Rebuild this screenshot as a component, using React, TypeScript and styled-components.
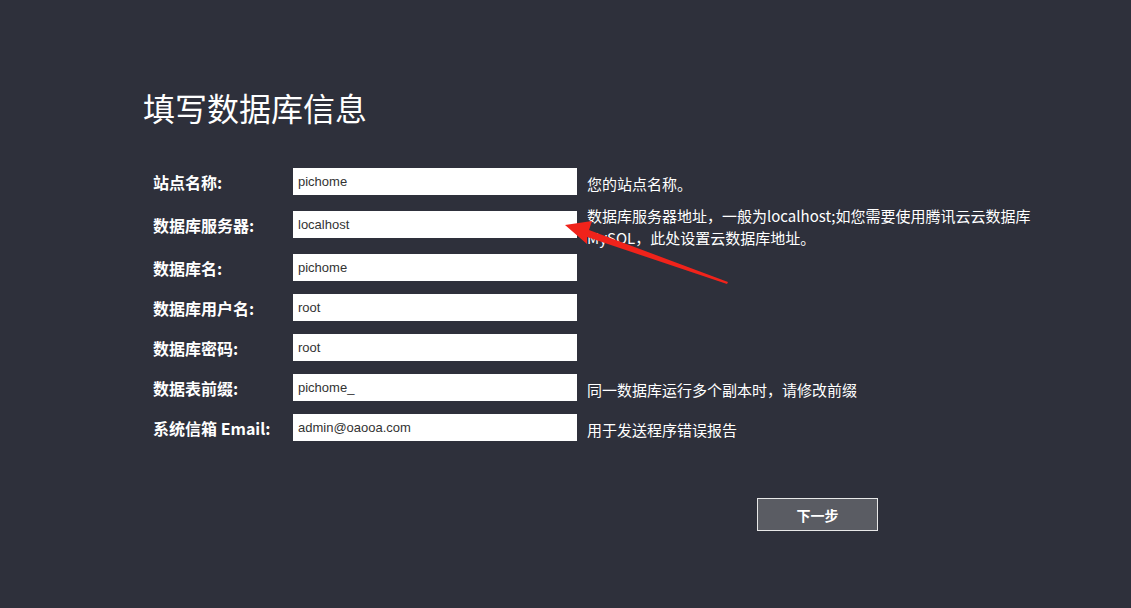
import React from "react";
import styled, { createGlobalStyle } from "styled-components";

const Global = createGlobalStyle`
  html, body {
    margin: 0;
    padding: 0;
    background: #2e303b;
  }
  body {
    font-family: "Noto Sans CJK SC", "Liberation Sans", sans-serif;
    color: #ffffff;
  }
`;

const Page = styled.div`
  position: relative;
  width: 1131px;
  height: 608px;
  box-sizing: border-box;
  padding: 85px 0 0 143px;
  background: #2e303b;
  overflow: hidden;
`;

const Content = styled.div`
  width: 735px;
`;

const Title = styled.h1`
  margin: 0 0 39px;
  font-size: 32px;
  line-height: 44px;
  font-weight: 400;
  color: #ffffff;
  font-family: "Noto Sans CJK SC", sans-serif;
`;

const Form = styled.div`
  display: flex;
  flex-direction: column;
  padding-left: 10px;
`;

const Row = styled.div<{ $gap: number }>`
  display: grid;
  grid-template-columns: 130px 284px 452px;
  grid-template-rows: 27px;
  column-gap: 10px;
  height: 27px;
  align-items: center;
  margin-bottom: ${(p) => p.$gap}px;
`;

const Label = styled.label`
  font-size: 16px;
  font-weight: 700;
  color: #ffffff;
  white-space: nowrap;
  font-family: "Noto Sans CJK SC", sans-serif;
  line-height: 22px;
`;

const Input = styled.input`
  box-sizing: border-box;
  width: 284px;
  height: 27px;
  border: none;
  outline: none;
  margin: 0;
  padding: 0 5px;
  background: #ffffff;
  color: #333333;
  font-size: 13px;
  font-family: "Liberation Sans", Arial, sans-serif;
`;

const Desc = styled.div`
  font-size: 15px;
  line-height: 22px;
  margin-top: 4px;
  color: #ffffff;
  font-family: "Noto Sans CJK SC", sans-serif;
`;

const Footer = styled.div`
  display: flex;
  justify-content: flex-end;
  margin-top: 57px;
`;

const NextButton = styled.button`
  box-sizing: border-box;
  width: 121px;
  height: 33px;
  background: #5a5c63;
  border: 1px solid #e8e8e8;
  color: #ffffff;
  font-size: 14px;
  font-weight: 700;
  font-family: "Noto Sans CJK SC", sans-serif;
  cursor: pointer;
  padding: 0;
`;

const Annotation = styled.svg`
  position: absolute;
  left: 0;
  top: 0;
  pointer-events: none;
`;

const fields = [
  { label: "站点名称:", value: "pichome", desc: "您的站点名称。", gap: 16 },
  {
    label: "数据库服务器:",
    value: "localhost",
    desc: "数据库服务器地址，一般为localhost;如您需要使用腾讯云云数据库MySQL，此处设置云数据库地址。",
    gap: 16,
  },
  { label: "数据库名:", value: "pichome", desc: "", gap: 13 },
  { label: "数据库用户名:", value: "root", desc: "", gap: 13 },
  { label: "数据库密码:", value: "root", desc: "", gap: 13 },
  { label: "数据表前缀:", value: "pichome_", desc: "同一数据库运行多个副本时，请修改前缀", gap: 13 },
  { label: "系统信箱 Email:", value: "admin@oaooa.com", desc: "用于发送程序错误报告", gap: 0 },
];

export default function App() {
  return (
    <>
      <Global />
      <Page>
        <Content>
          <Title>填写数据库信息</Title>
          <Form>
            {fields.map((f) => (
              <Row key={f.label} $gap={f.gap}>
                <Label>{f.label}</Label>
                <Input defaultValue={f.value} />
                <Desc>{f.desc}</Desc>
              </Row>
            ))}
          </Form>
          <Footer>
            <NextButton>下一步</NextButton>
          </Footer>
        </Content>
        <Annotation width="1131" height="608" viewBox="0 0 1131 608">
          <polygon
            points="565,225 592,221 589,230 728,282 727,284 587,237 587,244"
            fill="#f0231b"
          />
        </Annotation>
      </Page>
    </>
  );
}
